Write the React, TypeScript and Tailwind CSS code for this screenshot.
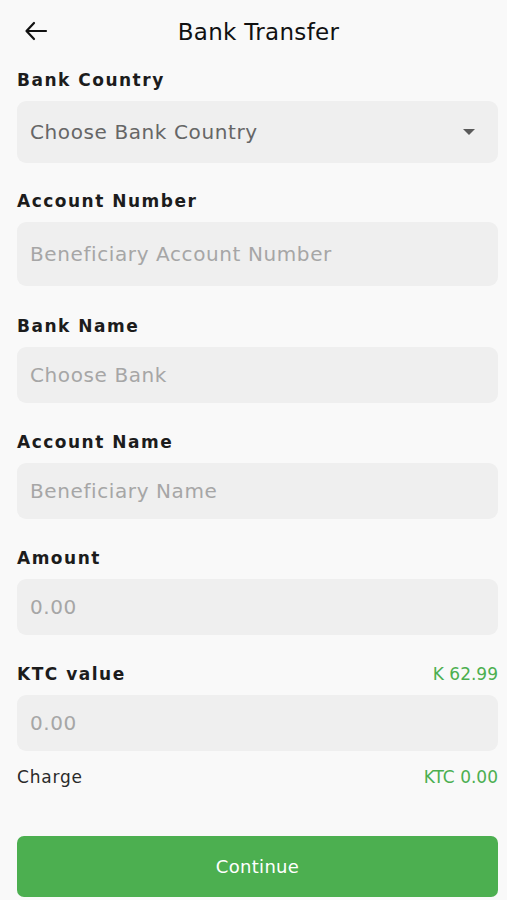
import React from 'react';

const Label: React.FC<{ text: string; right?: string }> = ({ text, right }) => (
  <div className="flex items-center justify-between h-[24px]">
    <span className="text-[17px] font-semibold tracking-[1.5px] text-[#1c1c1c]">{text}</span>
    {right && <span className="text-[17px] text-[#4caf50]">{right}</span>}
  </div>
);

const Field: React.FC<{ placeholder: string; h: string; dark?: boolean; dropdown?: boolean }> = ({
  placeholder,
  h,
  dark,
  dropdown,
}) => (
  <div className={`mt-[8px] ${h} rounded-[9px] bg-[#efefef] flex items-center justify-between pl-[13px] pr-[23px]`}>
    <span className={`text-[20px] tracking-[0.6px] ${dark ? 'text-[#666666]' : 'text-[#a6a6a6]'}`}>{placeholder}</span>
    {dropdown && (
      <svg width="12" height="7" viewBox="0 0 12 7">
        <path d="M0 0 L12 0 L6 6 Z" fill="#5a5a5a" />
      </svg>
    )}
  </div>
);

export default function App() {
  return (
    <div
      className="w-[507px] h-[900px] bg-[#f9f9f9] pl-[17px] pr-[9px] overflow-hidden"
      style={{ fontFamily: '"DejaVu Sans", "Open Sans", sans-serif' }}
    >
      {/* Header */}
      <div className="relative h-[69px] flex items-center justify-center">
        <svg className="absolute left-[7px] top-[21px]" width="24" height="20" viewBox="0 0 24 20">
          <path d="M22 10 H3 M10 2 L2.5 10 L10 18" stroke="#111" strokeWidth="2.2" fill="none" strokeLinecap="round" strokeLinejoin="round" />
        </svg>
        <span className="text-[23px] tracking-[0.3px] text-[#111] pl-[2px] -mt-[4px]">Bank Transfer</span>
      </div>

      <Label text="Bank Country" />
      <Field placeholder="Choose Bank Country" h="h-[62px]" dark dropdown />

      <div className="mt-[27px]">
        <Label text="Account Number" />
        <Field placeholder="Beneficiary Account Number" h="h-[64px]" />
      </div>

      <div className="mt-[29px]">
        <Label text="Bank Name" />
        <Field placeholder="Choose Bank" h="h-[56px]" />
      </div>

      <div className="mt-[28px]">
        <Label text="Account Name" />
        <Field placeholder="Beneficiary Name" h="h-[56px]" />
      </div>

      <div className="mt-[28px]">
        <Label text="Amount" />
        <Field placeholder="0.00" h="h-[56px]" />
      </div>

      <div className="mt-[28px]">
        <Label text="KTC value" right="K 62.99" />
        <Field placeholder="0.00" h="h-[56px]" />
      </div>

      <div className="mt-[15px] flex items-center justify-between h-[24px]">
        <span className="text-[17px] tracking-[0.8px] text-[#2a2a2a]">Charge</span>
        <span className="text-[17px] text-[#4caf50]">KTC 0.00</span>
      </div>

      <button className="mt-[46px] w-full h-[61px] rounded-[7px] bg-[#4caf50] text-white text-[18px] tracking-[0.3px]">
        Continue
      </button>
    </div>
  );
}
